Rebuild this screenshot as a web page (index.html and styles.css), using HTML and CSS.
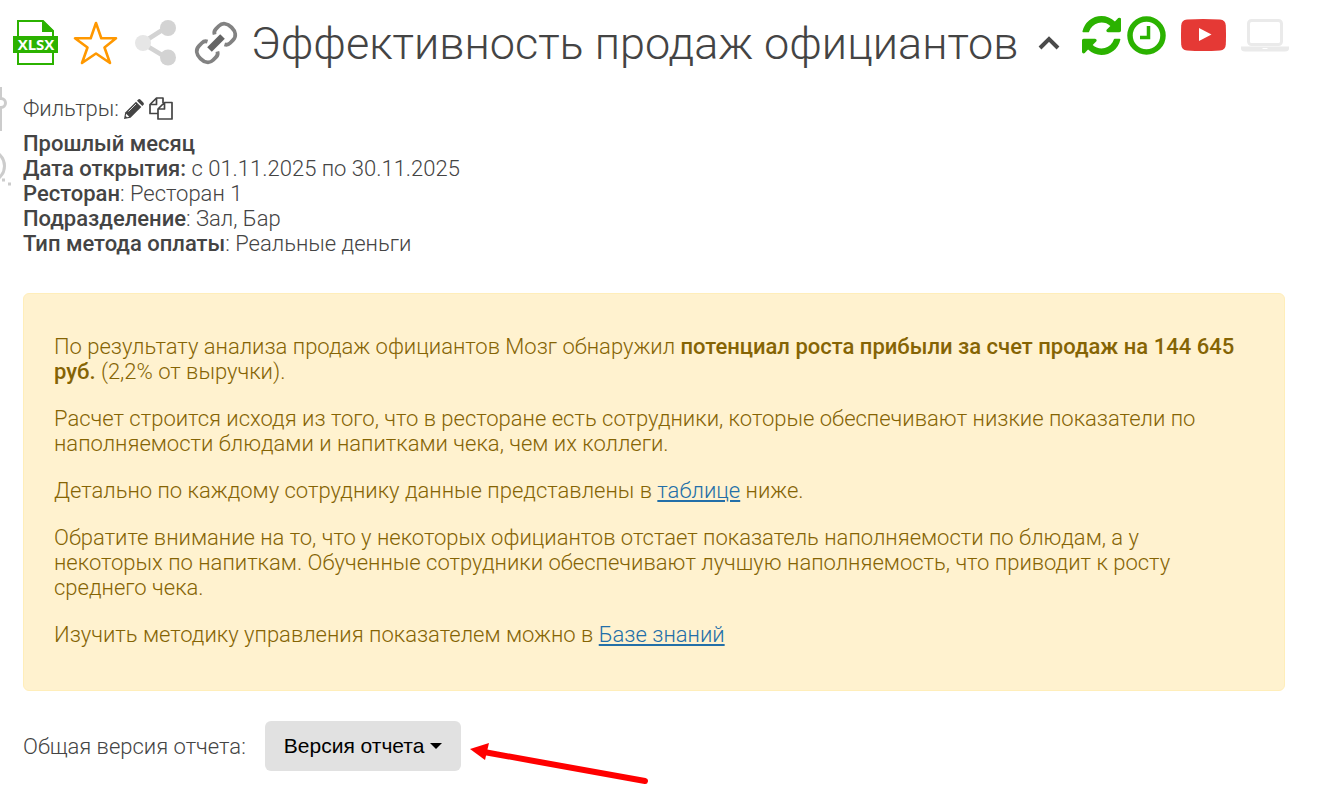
FILE: index.html
```html
<!DOCTYPE html>
<html lang="ru">
<head>
    <meta charset="UTF-8">
    <meta name="viewport" content="width=device-width, initial-scale=1.0">
    <title>Эффективность продаж официантов</title>
    <link rel="stylesheet" href="styles.css">
</head>
<body>
    <!-- Край боковой панели -->
    <svg class="side-icons" width="14" height="104" viewBox="0 0 14 104" fill="none" stroke="#ccc" stroke-width="3" aria-hidden="true">
        <path d="M0.500 0V44" />
        <circle cx="1" cy="16" r="4.500" fill="#fff" />
        <circle cx="-11" cy="79" r="15.500" />
        <path d="M2 93h3M8 97h3" />
    </svg>

    <div class="page">
        <header class="header">
            <div class="tools">
                <a href="#" aria-label="Скачать XLSX">
                    <svg width="46" height="46" viewBox="0 0 46 46">
                        <path d="M5 1h25l10 10v33H5z" fill="#fff" stroke="#2bb200" stroke-width="2" />
                        <path d="M29 0l12 11v1H29z" fill="#2bb200" />
                        <rect y="16" width="45" height="17" fill="#2bb200" />
                        <text x="23" y="30" class="xlsx">XLSX</text>
                    </svg>
                </a>
                <a href="#" aria-label="В избранное">
                    <svg width="46" height="46" viewBox="0 0 46 46">
                        <path d="M23 3l5.300 15.200H43L31.500 27.500 37 43 23 33.500 9 43l5.500-15.500L2 18.200h15.700z" fill="none" stroke="#ff9800" stroke-width="2.600" stroke-linejoin="round" />
                    </svg>
                </a>
                <a href="#" aria-label="Поделиться">
                    <svg width="46" height="46" viewBox="0 0 46 46">
                        <path d="M34 7L9 23l25 15" fill="none" stroke="#d3d3d3" stroke-width="4.500" />
                        <circle cx="35" cy="8" r="8" fill="#d3d3d3" />
                        <circle cx="35" cy="37.500" r="8" fill="#d3d3d3" />
                        <circle cx="10" cy="23" r="8" fill="#e6e6e6" />
                    </svg>
                </a>
                <a href="#" aria-label="Ссылка">
                    <svg width="46" height="46" viewBox="0 0 46 46" fill="none">
                        <g transform="rotate(-45 23 23)" stroke="#828282" stroke-width="3.800">
                            <path d="M18 30c-1 2-3 3-5 3H9c-5 0-8-4-8-10s3-10 8-10h4c2 0 4 1 5 3" />
                            <path d="M28 16c1-2 3-3 5-3h4c5 0 8 4 8 10s-3 10-8 10h-4c-2 0-4-1-5-3" />
                        </g>
                        <path d="M16.500 29.500l13-13" stroke="#646464" stroke-width="6.500" />
                    </svg>
                </a>
            </div>
            <h1>Эффективность продаж официантов</h1>
            <button class="icon-btn toggle" type="button" aria-label="Свернуть">
                <svg width="22" height="14" viewBox="0 0 22 14" fill="none" stroke="#4a4a4a" stroke-width="4"><path d="M2 12l9-9 9 9" /></svg>
            </button>
            <div class="actions">
                <button class="icon-btn" type="button" aria-label="Обновить">
                    <svg width="39" height="39" viewBox="0 0 1536 1536" fill="#2bb200"><path d="M1511 928q0 5-1 7-64 268-268 434.500T764 1536q-146 0-282.500-55T238 1324l-129 129q-19 19-45 19t-45-19-19-45V960q0-26 19-45t45-19h448q26 0 45 19t19 45-19 45l-137 137q71 66 161 102t187 36q134 0 250-65t186-179q11-17 53-117 8-23 30-23h192q13 0 22.500 9.500t9.500 22.500zm25-800v448q0 26-19 45t-45 19h-448q-26 0-45-19t-19-45 19-45l138-138Q969 256 768 256q-134 0-250 65T332 500q-11 17-53 117-8 23-30 23H50q-13 0-22.500-9.500T18 608v-7q65-268 270-434.500T768 0q146 0 284 55.500T1297 212l130-129q19-19 45-19t45 19 19 45z" /></svg>
                </button>
                <button class="icon-btn" type="button" aria-label="История">
                    <svg width="39" height="39" viewBox="0 0 39 39" fill="none" stroke="#2bb200"><circle cx="19.500" cy="19.500" r="16.500" stroke-width="5.500" /><path d="M21.500 10v11.500H13" stroke-width="3.500" /></svg>
                </button>
                <a class="video" href="#" aria-label="Видео">
                    <svg width="45" height="32" viewBox="0 0 45 32"><path d="M6 .5Q22-.5 39 .5q5.500.5 5.800 6 .4 9.500 0 19-.3 5.500-5.800 6-17 1-33 0-5.500-.5-5.800-6-.4-9.500 0-19Q.5 1 6 .5z" fill="#e53935" /><path d="M18 9l12.500 6.500L18 22z" fill="#fff" /></svg>
                </a>
                <button class="icon-btn" type="button" aria-label="Экран">
                    <svg width="48" height="33" viewBox="0 0 48 33"><rect x="7.500" y="1.500" width="33" height="24" rx="3" fill="none" stroke="#eaeaea" stroke-width="3" /><path d="M0 27.500h48v2q0 3-4 3H4q-4 0-4-3z" fill="#eaeaea" /><path d="M21.500 29.500h5" stroke="#fff" /></svg>
                </button>
            </div>
        </header>

        <section class="filters">
            <div class="filters-title">
                Фильтры:
                <button class="icon-btn" type="button" aria-label="Изменить">
                    <svg width="20" height="20" viewBox="0 0 20 20" fill="#444"><path d="M0 20l1.200-6.500L12 2.700 17.300 8 6.500 18.800z" /><path d="M13 1.700l1-1q1.300-1.200 2.600 0l2.700 2.700q1.200 1.300 0 2.600l-1 1z" /><path d="M2.200 14.800l3 3-2.200.5-1.300-1.300z" fill="#fff" /><path d="M4.500 12.500l7.500-7.500" stroke="#fff" stroke-width=".8" /></svg>
                </button>
                <button class="icon-btn" type="button" aria-label="Копировать">
                    <svg width="24" height="23" viewBox="0 0 24 23" fill="none" stroke="#444" stroke-width="1.700" stroke-linejoin="round"><path d="M9 16.500H1V7.500L7.500 1H14v5M7.500 1v6.500H1" /><path d="M9 12l6.500-6.500H23V22H9zM15.500 5.500V12H9" /></svg>
                </button>
            </div>
            <div><b>Прошлый месяц</b></div>
            <div><b>Дата открытия:</b> с 01.11.2025 по 30.11.2025</div>
            <div><b>Ресторан</b>: Ресторан 1</div>
            <div><b>Подразделение</b>: Зал, Бар</div>
            <div><b>Тип метода оплаты</b>: Реальные деньги</div>
        </section>

        <section class="alert">
            <p>По результату анализа продаж официантов Мозг обнаружил <b>потенциал роста прибыли за счет продаж на 144 645 руб.</b> (2,2% от выручки).</p>
            <p>Расчет строится исходя из того, что в ресторане есть сотрудники, которые обеспечивают низкие показатели по наполняемости блюдами и напитками чека, чем их коллеги.</p>
            <p>Детально по каждому сотруднику данные представлены в <a href="#">таблице</a> ниже.</p>
            <p>Обратите внимание на то, что у некоторых официантов отстает показатель наполняемости по блюдам, а у некоторых по напиткам. Обученные сотрудники обеспечивают лучшую наполняемость, что приводит к росту среднего чека.</p>
            <p>Изучить методику управления показателем можно в <a href="#">Базе знаний</a></p>
        </section>

        <div class="version">
            <span>Общая версия отчета:</span>
            <button class="version-btn" type="button">Версия отчета <span class="caret"></span></button>
            <svg class="arrow" width="180" height="44" viewBox="0 0 180 44" fill="red" aria-hidden="true">
                <path d="M14 9L175 38" stroke="red" stroke-width="6" stroke-linecap="round" />
                <path d="M0 6L19 0l-4 17z" />
            </svg>
        </div>
    </div>
</body>
</html>
```
FILE: styles.css
```css
body {
    margin: 0;
    background: #fff;
    color: #444;
    font-family: Roboto, "Liberation Sans", sans-serif;
    font-size: 22px;
    font-weight: 300;
    line-height: 25px;
}

svg {
    display: block;
}

b {
    font-weight: 500;
}

.side-icons {
    position: absolute;
    left: 0;
    top: 87px;
}

.page {
    padding: 11px 34px 32px 23px;
}

.header {
    display: flex;
    align-items: center;
    height: 64px;
    margin-left: -10px;
}

.tools {
    display: flex;
    gap: 14px;
}

h1 {
    margin: 0 20px 0 12px;
    padding-top: 2px;
    font-size: 45px;
    font-weight: 300;
    line-height: 64px;
    white-space: nowrap;
}

.icon-btn {
    padding: 0;
    border: 0;
    background: none;
    cursor: pointer;
}

.actions {
    display: flex;
    align-items: center;
    gap: 6px;
    margin-left: 22px;
    padding-bottom: 16px;
}

.video {
    margin: 0 9px;
}

.xlsx {
    fill: #fff;
    font-family: "Open Sans", sans-serif;
    font-size: 15px;
    font-weight: 700;
    text-anchor: middle;
}

.filters-title {
    display: flex;
    align-items: center;
    gap: 5px;
    height: 35px;
    margin-top: 16px;
    padding-bottom: 5px;
}

.alert {
    margin-top: 37px;
    padding: 40px 40px 43px 30px;
    border: 1px solid #ffeeba;
    border-radius: 6px;
    background: #fff2cf;
    color: #856404;
}

.alert p {
    margin: 0 0 22px;
}

.alert p:last-child {
    margin-bottom: 0;
}

.alert a {
    color: #236fa8;
    text-decoration: underline;
}

.version {
    display: flex;
    align-items: center;
    margin-top: 30px;
}

.version-btn {
    display: flex;
    align-items: center;
    gap: 6px;
    height: 50px;
    margin-left: 19px;
    padding: 0 19px;
    border: 0;
    border-radius: 6px;
    background: #e1e1e1;
    color: #000;
    font-family: "Liberation Sans", Arial, sans-serif;
    font-size: 21px;
    cursor: pointer;
}

.caret {
    border-top: 6px solid #000;
    border-left: 6px solid transparent;
    border-right: 6px solid transparent;
}

.arrow {
    margin: 19px 0 -19px 9px;
}
```
